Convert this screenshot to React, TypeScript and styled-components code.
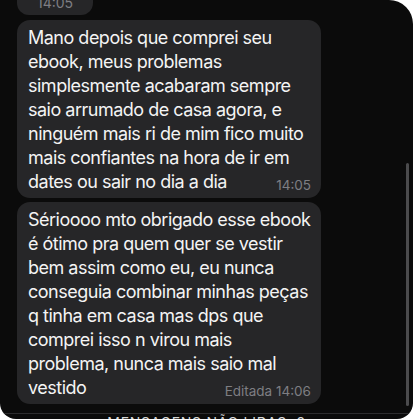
import React from "react";
import styled, { createGlobalStyle } from "styled-components";

const Global = createGlobalStyle`
  html, body { margin: 0; padding: 0; background: #ffffff; }
  body { width: 413px; height: 419px; overflow: hidden; }
`;

const Panel = styled.div`
  position: relative;
  width: 413px;
  height: 419px;
  background: #0b0b0b;
  border-radius: 0 24px 16px 16px;
  overflow: hidden;
  display: flex;
  flex-direction: column;
  font-family: "Inter", "Liberation Sans", sans-serif;
  -webkit-font-smoothing: antialiased;
`;

const List = styled.div`
  display: flex;
  flex-direction: column;
  gap: 4px;
  padding: 0 92px 0 17px;
`;

const Stub = styled.div`
  width: 76px;
  height: 15px;
  background: #262628;
  border-radius: 0 0 12px 12px;
  display: flex;
  align-items: flex-end;
  justify-content: center;
  overflow: hidden;
  margin-bottom: 1px;
`;

const StubTime = styled.span`
  font-size: 14px;
  line-height: 14px;
  color: #7e7e83;
  margin-bottom: 5px;
`;

const Bubble = styled.div`
  background: #262628;
  border-radius: 13px;
  padding: 6px 10px 1px 11px;
  color: #f4f4f4;
  font-size: 18px;
  line-height: 24px;
  letter-spacing: -0.5px;
  white-space: nowrap;
`;

const Meta = styled.span`
  float: right;
  font-size: 13.5px;
  line-height: 24px;
  color: #7e7e83;
  margin-top: 3px;
  letter-spacing: 0;
`;

const Footer = styled.div`
  margin-top: 9px;
  border-top: 1px solid #2c2c2e;
  display: flex;
  justify-content: center;
`;

const FooterText = styled.span`
  font-size: 14px;
  line-height: 15px;
  letter-spacing: 0.7px;
  color: #d6d6d6;
  text-transform: uppercase;
  padding-top: 1px;
`;

const Scrollbar = styled.div`
  position: absolute;
  right: 4px;
  top: 163px;
  width: 3px;
  height: 243px;
  border-radius: 2px;
  background: #4b4b4d;
`;

const Lines: React.FC<{ lines: string[] }> = ({ lines }) => (
  <>
    {lines.map((l, i) => (
      <React.Fragment key={i}>
        {l}
        {i < lines.length - 1 && <br />}
      </React.Fragment>
    ))}
  </>
);

export default function App() {
  return (
    <>
      <Global />
      <Panel>
        <List>
          <Stub>
            <StubTime>14:05</StubTime>
          </Stub>
          <Bubble>
            <Lines
              lines={[
                "Mano depois que comprei seu",
                "ebook, meus problemas",
                "simplesmente acabaram sempre",
                "saio arrumado de casa agora, e",
                "ninguém mais ri de mim fico muito",
                "mais confiantes na hora de ir em",
                "dates ou sair no dia a dia",
              ]}
            />
            <Meta>14:05</Meta>
          </Bubble>
          <Bubble>
            <Lines
              lines={[
                "Sérioooo mto obrigado esse ebook",
                "é ótimo pra quem quer se vestir",
                "bem assim como eu, eu nunca",
                "conseguia combinar minhas peças",
                "q tinha em casa mas dps que",
                "comprei isso n virou mais",
                "problema, nunca mais saio mal",
                "vestido",
              ]}
            />
            <Meta>Editada 14:06</Meta>
          </Bubble>
        </List>
        <Footer>
          <FooterText>Mensagens não lidas: 2</FooterText>
        </Footer>
        <Scrollbar />
      </Panel>
    </>
  );
}
